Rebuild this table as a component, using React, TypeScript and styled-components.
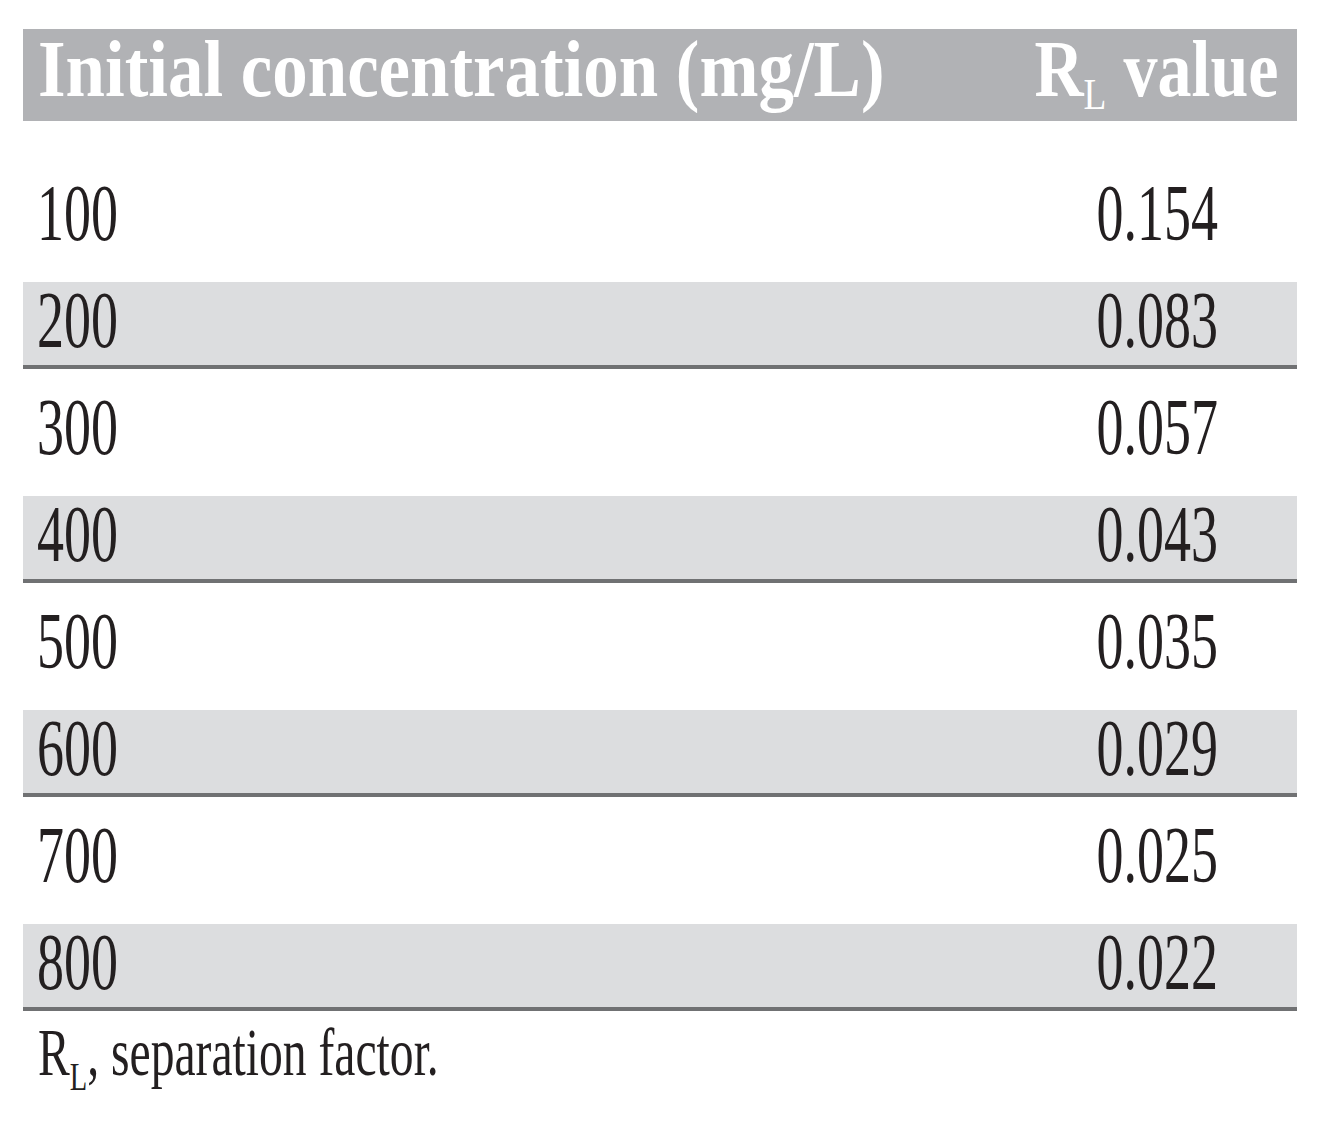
import { FunctionComponent } from "react";
import styled, { createGlobalStyle } from "styled-components";

const GlobalStyle = createGlobalStyle`
  html, body {
    margin: 0;
    padding: 0;
    background: #ffffff;
  }
  body {
    font-family: "Liberation Serif", "Times New Roman", serif;
    color: #231f20;
  }
`;

const rows = [
  { conc: "100", rl: "0.154" },
  { conc: "200", rl: "0.083" },
  { conc: "300", rl: "0.057" },
  { conc: "400", rl: "0.043" },
  { conc: "500", rl: "0.035" },
  { conc: "600", rl: "0.029" },
  { conc: "700", rl: "0.025" },
  { conc: "800", rl: "0.022" },
];

const Page = styled.div`
  width: 1332px;
  height: 1121px;
  box-sizing: border-box;
  padding: 29px 35px 0 23px;
  overflow: hidden;
`;

const Table = styled.div`
  display: flex;
  flex-direction: column;
  width: 1274px;
`;

const HeaderRow = styled.div`
  display: flex;
  align-items: flex-start;
  height: 92px;
  box-sizing: border-box;
  padding: 0 19px 0 15px;
  margin-bottom: 34px;
  background-color: #b1b2b5;
  color: #ffffff;
  font-weight: 700;
  font-size: 81px;
  line-height: 81px;
  white-space: nowrap;
`;

const Cell = styled.div<{ $align: "left" | "right" }>`
  flex: ${(p) => (p.$align === "left" ? "1 1 0" : "none")};
  min-width: 0;
  display: flex;
  justify-content: ${(p) => (p.$align === "left" ? "flex-start" : "flex-end")};
`;

const Squeeze = styled.span<{ $origin: "left" | "right"; $scale: number }>`
  display: inline-block;
  flex: none;
  transform: scaleX(${(p) => p.$scale});
  transform-origin: ${(p) => p.$origin} center;
`;

const Sub = styled.span`
  display: inline-block;
  font-size: 0.55em;
  font-weight: 400;
  vertical-align: -13px;
  line-height: 1;
`;

const DataRow = styled.div<{ $shaded: boolean }>`
  display: flex;
  align-items: flex-start;
  height: 107px;
  box-sizing: border-box;
  padding: 18px 79px 0 14px;
  font-size: 80px;
  line-height: 80px;
  white-space: nowrap;
  background: ${(p) =>
    p.$shaded
      ? "linear-gradient(to bottom, transparent 20px, #dcdddf 20px)"
      : "transparent"};
  border-bottom: ${(p) => (p.$shaded ? "4px solid #707173" : "0")};
`;

const Footnote = styled.div`
  padding: 7px 0 0 15px;
  font-size: 68px;
  line-height: 68px;
  white-space: nowrap;
`;

const FootSub = styled.span`
  display: inline-block;
  font-size: 0.6em;
  vertical-align: -15px;
  line-height: 1;
`;

const App: FunctionComponent = () => {
  return (
    <Page>
      <GlobalStyle />
      <Table>
        <HeaderRow>
          <Cell $align="left">
            <Squeeze $origin="left" $scale={0.875}>
              Initial concentration (mg/L)
            </Squeeze>
          </Cell>
          <Cell $align="right">
            <Squeeze $origin="right" $scale={0.84}>
              R<Sub>L</Sub> value
            </Squeeze>
          </Cell>
        </HeaderRow>
        {rows.map((r, i) => (
          <DataRow key={r.conc} $shaded={i % 2 === 1}>
            <Cell $align="left">
              <Squeeze $origin="left" $scale={0.675}>
                {r.conc}
              </Squeeze>
            </Cell>
            <Cell $align="right">
              <Squeeze $origin="right" $scale={0.675}>
                {r.rl}
              </Squeeze>
            </Cell>
          </DataRow>
        ))}
      </Table>
      <Footnote>
        <Squeeze $origin="left" $scale={0.7}>
          R<FootSub>L</FootSub>, separation factor.
        </Squeeze>
      </Footnote>
    </Page>
  );
};

export default App;
